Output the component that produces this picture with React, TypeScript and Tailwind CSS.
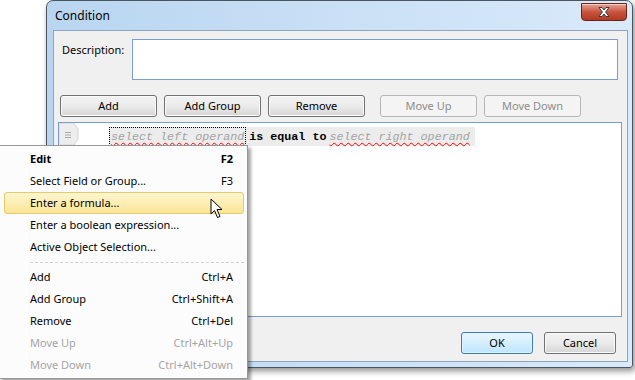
import React from 'react';

const ui = { fontFamily: '"Noto Sans", "Open Sans", sans-serif' };
const mono = { fontFamily: '"Liberation Mono", "DejaVu Sans Mono", monospace' };

const wavy = {
  textDecorationLine: 'underline',
  textDecorationStyle: 'wavy' as const,
  textDecorationColor: '#ff0000',
  textDecorationThickness: '1px',
  textUnderlineOffset: '2px',
};

const Btn = ({ label, disabled, primary, w = 'w-[97px]' }: { label: string; disabled?: boolean; primary?: boolean; w?: string }) => (
  <div
    className={
      'h-[22px] flex items-center justify-center rounded-[3px] border text-[11px] ' +
      w +
      (disabled
        ? ' border-[#b5b8bb] bg-[#f4f4f4] text-[#8d8d8d]'
        : primary
        ? ' border-[#3c7fb1] bg-gradient-to-b from-[#eaf6fd] to-[#bee6fd] text-black shadow-[inset_0_0_0_1px_#dff2fc]'
        : ' border-[#707070] bg-gradient-to-b from-[#f2f2f2] via-[#ebebeb] to-[#d5d5d5] text-black shadow-[inset_0_0_0_1px_#fcfcfc]')
    }
  >
    {label}
  </div>
);

type Item = { label: string; key?: string; bold?: boolean; disabled?: boolean; hot?: boolean; sep?: boolean };

const items: Item[] = [
  { label: 'Edit', key: 'F2', bold: true },
  { label: 'Select Field or Group...', key: 'F3' },
  { label: 'Enter a formula...', hot: true },
  { label: 'Enter a boolean expression...' },
  { label: 'Active Object Selection...' },
  { label: '', sep: true },
  { label: 'Add', key: 'Ctrl+A' },
  { label: 'Add Group', key: 'Ctrl+Shift+A' },
  { label: 'Remove', key: 'Ctrl+Del' },
  { label: 'Move Up', key: 'Ctrl+Alt+Up', disabled: true },
  { label: 'Move Down', key: 'Ctrl+Alt+Down', disabled: true },
];

export default function App() {
  return (
    <div className="relative w-[635px] h-[380px] bg-white overflow-hidden text-[11px]" style={ui}>
      {/* dialog window */}
      <div className="absolute left-[46px] top-0 w-[587px] h-[368px] rounded-t-[7px] rounded-b-[3px] border border-[#4a5560] bg-gradient-to-r from-[#b9d5f0] via-[#c9e0f6] to-[#d9eafa] shadow-[2px_3px_6px_rgba(0,0,0,0.45)] flex flex-col pl-[6px] pr-[4px] pb-[5px]">
        <div className="h-[29px] flex items-center justify-between">
          <span className="pl-[2px] text-[12px] text-black">Condition</span>
          <div className="self-start mt-[2px] mr-[1px] w-[46px] h-[18px] rounded-b-[4px] border border-[#6b2318] bg-gradient-to-b from-[#e5a493] via-[#c8533d] to-[#b23a25] flex items-center justify-center shadow-[inset_0_1px_0_rgba(255,255,255,0.5)]">
            <svg width="14" height="12" viewBox="0 0 14 12">
              <path d="M2 1.5 L5 1.5 L7 4 L9 1.5 L12 1.5 L8.6 6 L12 10.5 L9 10.5 L7 8 L5 10.5 L2 10.5 L5.4 6 Z" fill="#fff" stroke="#3a3a3a" strokeWidth="1" strokeLinejoin="round" />
            </svg>
          </div>
        </div>

        {/* client area */}
        <div className="flex-1 border border-[#8ea5bd] bg-[#f0f0f0] flex flex-col">
          <div className="flex pt-[8px] pl-[8px] pr-[9px]">
            <span className="w-[70px] pt-[3px] text-black">Description:</span>
            <div className="flex-1 h-[41px] border border-[#7a9fcf] bg-white" />
          </div>

          <div className="flex gap-[7px] pl-[6px] mt-[15px]">
            <Btn label="Add" />
            <Btn label="Add Group" />
            <Btn label="Remove" />
            <div className="w-[1px]" />
            <Btn label="Move Up" disabled />
            <Btn label="Move Down" disabled />
          </div>

          <div className="ml-[4px] mr-[5px] mt-[5px] h-[195px] border border-[#7a9fcf] bg-white">
            <div className="flex items-start">
              <div className="relative w-[20px] h-[24px]">
                <svg width="20" height="24" viewBox="0 0 20 24" className="absolute left-0 top-0">
                  <path d="M0 0 H15 L19 6 V16 L15 22 H0 Z" fill="#ededed" stroke="#d6d6d6" strokeWidth="1" />
                  <path d="M6 9.5 H12 M6 12 H12 M6 14.5 H12" stroke="#a9a9a9" strokeWidth="1" />
                </svg>
              </div>
              <div className="ml-[30px] mt-[4px] flex items-center h-[19px] bg-[#ececec] text-[11.7px] leading-[19px]" style={mono}>
                <span className="h-[19px] px-[1px] pt-[2px] flex items-center border border-dotted border-black italic text-[#a3a3a3]" style={wavy}>
                  select left operand
                </span>
                <span className="px-[3px] pt-[2px] font-bold text-black">is equal to</span>
                <span className="pr-[5px] pt-[2px] italic text-[#a3a3a3]" style={wavy}>
                  select right operand
                </span>
              </div>
            </div>
          </div>

          <div className="flex justify-end gap-[11px] pr-[11px] mt-[15px]">
            <Btn label="OK" primary w="w-[72px]" />
            <Btn label="Cancel" w="w-[72px]" />
          </div>
        </div>
      </div>

      {/* context menu */}
      <div className="absolute left-[-1px] top-[145px] w-[249px] border border-[#979797] bg-[#fcfcfc] shadow-[3px_3px_3px_rgba(0,0,0,0.35)] py-[2px] pl-[4px] pr-[3px]">
        <div className="absolute left-[26px] top-[2px] bottom-[2px] w-px bg-[#e2e3e3] border-r border-white" />
        {items.map((it, i) =>
          it.sep ? (
            <div key={i} className="h-[8px] flex items-center pl-[26px]">
              <div className="w-full border-t border-dashed border-[#d0d0d0]" />
            </div>
          ) : (
            <div
              key={i}
              className={
                'relative h-[22px] flex items-center justify-between pl-[25px] pr-[10px] ' +
                (it.hot ? 'rounded-[3px] border border-[#e8c96b] bg-gradient-to-b from-[#fdf6cf] to-[#fbe596]' : 'border border-transparent') +
                (it.disabled ? ' text-[#a5a5a5]' : ' text-black') +
                (it.bold ? ' font-bold' : '')
              }
            >
              <span>{it.label}</span>
              {it.key && <span>{it.key}</span>}
            </div>
          )
        )}
      </div>

      {/* mouse pointer */}
      <svg className="absolute left-[210px] top-[198px]" width="14" height="21" viewBox="0 0 14 21">
        <path d="M1 1 V16 L4.5 12.5 L7.5 19.5 L10 18.5 L7 11.5 H12 Z" fill="#fff" stroke="#000" strokeWidth="1" strokeLinejoin="round" />
      </svg>
    </div>
  );
}
